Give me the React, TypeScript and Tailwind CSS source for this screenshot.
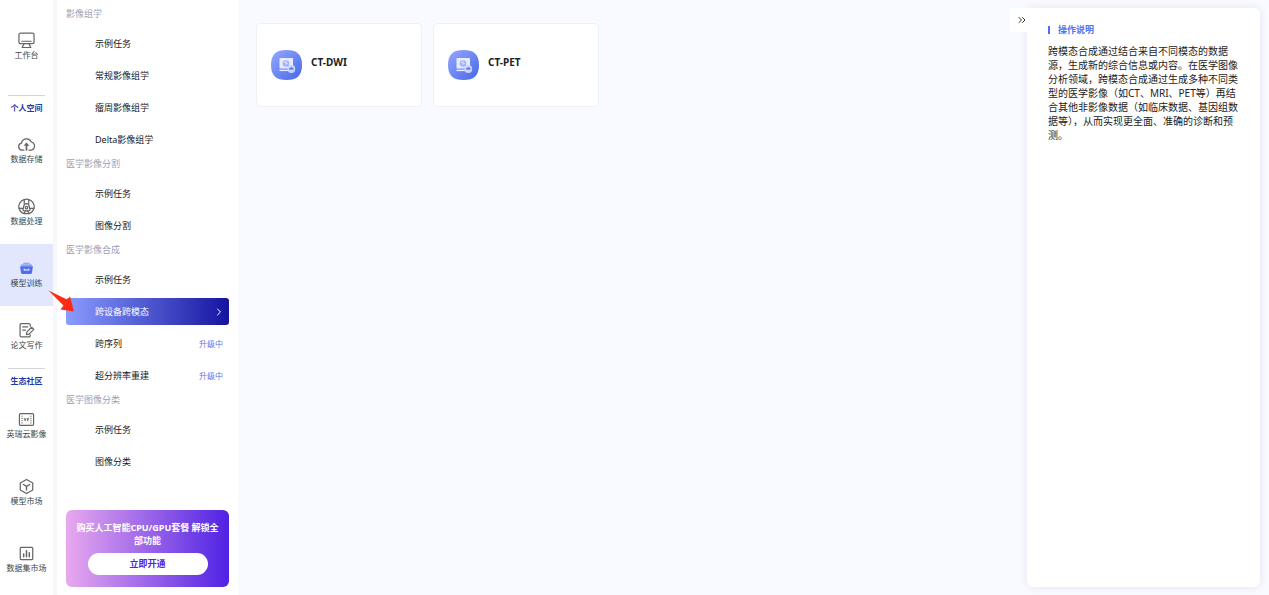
import type { ReactNode } from 'react';
import { ChevronRight, ChevronsRight } from 'lucide-react';

type RailItem = {
  label: string;
  icon: ReactNode;
  active?: boolean;
};

type MenuGroup = {
  title: string;
  items: { label: string; badge?: string; active?: boolean }[];
};

const stroke = {
  viewBox: '0 0 18 18',
  fill: 'none',
  stroke: '#666',
  strokeWidth: 1.3,
  strokeLinecap: 'round' as const,
  strokeLinejoin: 'round' as const,
  className: 'size-[17px]',
  'aria-hidden': true,
};

const MonitorIcon = () => (
  <svg {...stroke}>
    <rect x="1" y="1.2" width="16" height="11.2" rx="1.8" />
    <path d="M4 9.8h10M6.4 12.6 4.400 16.400h9.200l-2-3.800" />
  </svg>
);

const CloudIcon = () => (
  <svg {...stroke}>
    <path d="M6.3 15H4.300a3.800 3.800 0 0 1-.6-7.500 5.400 5.400 0 0 1 10.200-1.300A4.500 4.500 0 0 1 14 15h-2.300" />
    <path d="M9 14.600V8.600" strokeWidth="1.800" />
    <path d="M5.900 10.200 9 6.800l3.100 3.400z" fill="#666" stroke="none" />
  </svg>
);

const ProcessIcon = () => (
  <svg {...stroke}>
    <path d="M6.600 1.700a7.600 7.600 0 0 0-5.500 9.200h4.300M11.400 1.700a7.600 7.600 0 0 1 5.500 9.200h-4.300" />
    <path d="M6.600 1.700a7.600 7.600 0 0 1 4.800 0M6.600 1.700v4.200M11.400 1.700v4.200" />
    <path d="M1.100 10.900c.9 3 2.900 5 5.300 5.600l1.500-2.800M16.900 10.900c-.9 3-2.900 5-5.300 5.600l-1.500-2.800M6.400 16.500h5.200" />
    <path d="M9 6a3 3 0 0 1 2.900 2.900l.8 3.300a1.200 1.200 0 0 1-1.200 1.400h-5a1.200 1.200 0 0 1-1.200-1.400l.8-3.300A3 3 0 0 1 9 6z" />
    <circle cx="9" cy="10.200" r="1.300" />
  </svg>
);

const TrainIcon = () => (
  <svg viewBox="0 0 18 18" className="size-[17px]" aria-hidden>
    <path d="M6 3h6l.6 1.100H5.400z" fill="#7c92f5" />
    <path d="M3.600 4.700h10.800l.6 1.300H3z" fill="#6f87f2" />
    <path
      d="M2.200 6.700h13.600l-1 6.800a1.600 1.600 0 0 1-1.600 1.300H4.800a1.600 1.600 0 0 1-1.600-1.300z"
      fill="#4f6eee"
    />
    <path d="M6.600 9.200v1.400h4.800V9.200" fill="none" stroke="#fff" strokeWidth="1.100" />
  </svg>
);

const PaperIcon = () => (
  <svg {...stroke}>
    <path d="M13 4.400V3.200a1.400 1.400 0 0 0-1.400-1.400H3.600a1.400 1.400 0 0 0-1.400 1.400v11.200a1.400 1.400 0 0 0 1.400 1.400h8a1.400 1.400 0 0 0 1.400-1.400V13.600" />
    <path d="M5 5.200h5.200M5 8.600h3M9 13.400l.5-2.900 4.900-4.900 2.300 2.200-5 5z" />
  </svg>
);

const FilmIcon = () => (
  <svg {...stroke}>
    <rect x="1.500" y="2.800" width="15" height="12.400" rx="1.200" />
    <path d="M4.300 5.400v.1M4.300 7.800v.1M4.300 10.200v.1M4.300 12.600v.1M13.700 5.400v.1M13.700 7.800v.1M13.700 10.200v.1M13.700 12.600v.1" />
    <path d="m6.600 7.800.9 2.600.9-2.600M10 10.400V7.800h1.200v1.300H10" strokeWidth="0.900" />
  </svg>
);

const CubeIcon = () => (
  <svg {...stroke}>
    <path d="M9 1.500 15.600 5.200v7.600L9 16.500l-6.600-3.700V5.200z" />
    <path d="M5.700 6.900 9 8.900l3.300-2M9 8.900v3.700" strokeWidth="1.500" />
  </svg>
);

const ChartIcon = () => (
  <svg {...stroke}>
    <rect x="2.400" y="2.400" width="13.200" height="13.200" rx="1" />
    <path d="M6 9.600v2.800M9 6v6.400M12 8.200v4.200" strokeWidth="1.600" />
  </svg>
);

const personalItems: RailItem[] = [
  { label: '数据存储', icon: <CloudIcon /> },
  { label: '数据处理', icon: <ProcessIcon /> },
  { label: '模型训练', icon: <TrainIcon />, active: true },
  { label: '论文写作', icon: <PaperIcon /> },
];

const communityItems: RailItem[] = [
  { label: '英瑞云影像', icon: <FilmIcon /> },
  { label: '模型市场', icon: <CubeIcon /> },
  { label: '数据集市场', icon: <ChartIcon /> },
];

const menuGroups: MenuGroup[] = [
  {
    title: '影像组学',
    items: [
      { label: '示例任务' },
      { label: '常规影像组学' },
      { label: '瘤周影像组学' },
      { label: 'Delta影像组学' },
    ],
  },
  {
    title: '医学影像分割',
    items: [{ label: '示例任务' }, { label: '图像分割' }],
  },
  {
    title: '医学影像合成',
    items: [
      { label: '示例任务' },
      { label: '跨设备跨模态', active: true },
      { label: '跨序列', badge: '升级中' },
      { label: '超分辨率重建', badge: '升级中' },
    ],
  },
  {
    title: '医学图像分类',
    items: [{ label: '示例任务' }, { label: '图像分类' }],
  },
];

const models = ['CT-DWI', 'CT-PET'];

function RailLink({ item, tall }: { item: RailItem; tall?: boolean }) {
  return (
    <a
      href="#"
      className={`flex w-full shrink-0 flex-col items-center justify-center pb-0.5 text-[8px] leading-3 whitespace-nowrap text-[#444] ${
        tall ? 'h-[67px]' : 'h-[62px]'
      } ${item.active ? 'bg-[#e2e7fd]' : ''}`}
    >
      {item.icon}
      <span>{item.label}</span>
    </a>
  );
}

function RailHeading({ children }: { children: ReactNode }) {
  return (
    <h2 className="mx-2 h-[25px] shrink-0 border-t border-[#d5d5d8] text-center text-[8px] leading-6 font-bold whitespace-nowrap text-[#1f3ba6]">
      {children}
    </h2>
  );
}

function IconRail() {
  return (
    <nav className="flex w-[53px] shrink-0 flex-col bg-white pt-4">
      <RailLink item={{ label: '工作台', icon: <MonitorIcon /> }} />
      <div className="mt-[17px]">
        <RailHeading>个人空间</RailHeading>
        {personalItems.map((item) => (
          <RailLink key={item.label} item={item} />
        ))}
      </div>
      <RailHeading>生态社区</RailHeading>
      {communityItems.map((item) => (
        <RailLink key={item.label} item={item} tall />
      ))}
    </nav>
  );
}

function TaskMenu() {
  return (
    <div className="flex w-[185px] shrink-0 flex-col border-l-4 border-[#f8f8fa] bg-white px-[9px] pt-[3px] pb-2">
      <nav>
        {menuGroups.map((group) => (
          <section key={group.title}>
            <h3 className="text-[9px] leading-[22px] text-[#9a9fb8]">{group.title}</h3>
            {group.items.map((item) => (
              <a
                key={item.label}
                href="#"
                className={`mt-[5px] flex h-[27px] items-center justify-between rounded-[3px] pr-[6px] pl-[29px] text-[9px] ${
                  item.active
                    ? 'bg-linear-to-r/srgb from-[#8a9cff] to-[#1414a0] text-white'
                    : 'text-[#1a1a1a]'
                }`}
              >
                {item.label}
                {item.badge && <span className="text-[8px] text-[#5b78ee]">{item.badge}</span>}
                {item.active && <ChevronRight className="-mr-0.5 size-3" />}
              </a>
            ))}
          </section>
        ))}
      </nav>
      <div className="mt-auto flex flex-col items-center rounded-md bg-linear-to-r/srgb from-[#e8a9ee] to-[#4f22e4] px-2 pt-[11px] pb-3">
        <p className="text-center text-[9px] leading-[13px] font-bold text-white">
          购买人工智能CPU/GPU套餐 解锁全部功能
        </p>
        <button className="mt-[6px] h-[22px] w-[120px] rounded-full bg-white text-[9px] font-bold text-[#4f22e4]">
          立即开通
        </button>
      </div>
    </div>
  );
}

function ModelIcon() {
  return (
    <svg viewBox="0 0 31 30" className="h-[30px] w-[31px] shrink-0" aria-hidden>
      <defs>
        <linearGradient id="model-bg" x1="0" y1="0" x2="1" y2="1">
          <stop offset="0" stopColor="#95a9ff" />
          <stop offset="1" stopColor="#4766e8" />
        </linearGradient>
      </defs>
      <path
        d="M15.500 0C25.500 0 31 4 31 15s-5.500 15-15.500 15S0 26 0 15 5.500 0 15.500 0z"
        fill="url(#model-bg)"
      />
      <rect x="8.500" y="8" width="13.500" height="10.500" rx="0.800" fill="#e6ebff" />
      <rect x="8.500" y="19.600" width="9" height="1.500" fill="#e6ebff" />
      <circle cx="15" cy="13.500" r="3.300" fill="#9fb1fa" />
      <path d="M13 12.500h2v-1.600M15 14.800v-1.500h1.800" stroke="#e6ebff" strokeWidth="0.900" fill="none" />
      <circle cx="20.300" cy="19" r="3.900" fill="#c9d4ff" />
      <path d="M18 19.600a1.300 1.300 0 0 1 1-1.500 1.500 1.500 0 0 1 2.700 0 1.200 1.200 0 0 1 .9 1.500z" fill="#5673ec" />
    </svg>
  );
}

function ModelCard({ name }: { name: string }) {
  return (
    <a
      href="#"
      className="flex h-[84px] w-[166px] gap-[9px] rounded border border-[#f0f1f7] bg-white px-[14px] pt-[26px]"
    >
      <ModelIcon />
      <span className="pt-1 text-[10px] leading-4 font-bold text-[#222]">{name}</span>
    </a>
  );
}

function HelpPanel() {
  return (
    <aside className="flex shrink-0 pt-2 pr-[9px] pb-2">
      <button
        aria-label="收起"
        className="z-10 -mr-[6px] flex h-6 w-[23px] items-center justify-center rounded bg-white text-[#333]"
      >
        <ChevronsRight className="size-3" />
      </button>
      <div className="w-[233px] rounded-md bg-white px-[21px] pt-4 shadow-[0_0_8px_rgba(40,50,90,0.1)]">
        <h2 className="flex items-center gap-2 text-[9px] leading-3 font-bold text-[#5470ee]">
          <span className="h-2 w-0.5 bg-[#5470ee]" />
          操作说明
        </h2>
        <p className="mt-2 text-[10px] leading-[14px] text-[#222]">
          跨模态合成通过结合来自不同模态的数据源，生成新的综合信息或内容。在医学图像分析领域，跨模态合成通过生成多种不同类型的医学影像（如CT、MRI、PET等）再结合其他非影像数据（如临床数据、基因组数据等），从而实现更全面、准确的诊断和预测。
        </p>
      </div>
    </aside>
  );
}

function App() {
  return (
    <div
      lang="zh-CN"
      className="relative flex h-screen overflow-hidden bg-[#f9faff] font-['Noto_Sans','Noto_Sans_CJK_SC',sans-serif]"
    >
      <IconRail />
      <TaskMenu />
      <main className="flex flex-1 flex-wrap content-start gap-[11px] pt-[23px] pl-[18px]">
        {models.map((name) => (
          <ModelCard key={name} name={name} />
        ))}
      </main>
      <HelpPanel />

      {/* Pointer to the selected task */}
      <svg
        viewBox="0 0 28 24"
        className="pointer-events-none absolute top-[289px] left-[48px] h-6 w-7"
        aria-hidden
      >
        <path d="M0.500 1.500 19 10.500 22 7.500 26 22.500 12.500 20.500 15.500 16.500z" fill="#ff2a12" />
      </svg>
    </div>
  );
}

export default App;
